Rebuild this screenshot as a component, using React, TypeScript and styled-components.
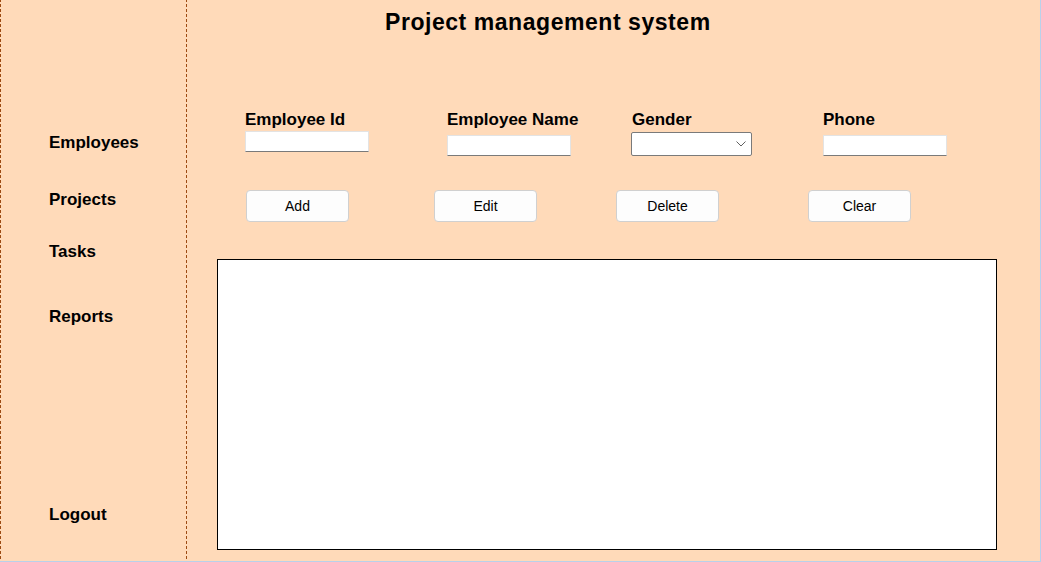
import React from "react";
import styled, { createGlobalStyle } from "styled-components";

const GlobalStyle = createGlobalStyle`
  html, body { margin: 0; padding: 0; background: #ffdab9; }
  body { font-family: "Liberation Sans", Arial, sans-serif; }
  * { box-sizing: border-box; }
`;

const Frame = styled.div`
  width: 1041px;
  height: 562px;
  display: flex;
  background: #ffdab9;
  border-right: 1px solid #b9d1ea;
  border-bottom: 1px solid #b9d1ea;
  overflow: hidden;
`;

const Sidebar = styled.nav`
  width: 187px;
  height: 560px;
  flex: none;
  display: flex;
  flex-direction: column;
  padding: 133px 0 35px 48px;
  border-left: 1px solid transparent;
  border-right: 1px solid transparent;
  border-image: repeating-linear-gradient(to bottom, #9c4a12 0 3px, transparent 3px 5px) 1;
`;

const NavItem = styled.div<{ $gap?: number; $bottom?: boolean }>`
  font-size: 17px;
  font-weight: bold;
  line-height: 20px;
  color: #000;
  margin-top: ${(p) => (p.$bottom ? "auto" : `${p.$gap ?? 0}px`)};
`;

const Main = styled.main`
  flex: 1;
  display: flex;
  flex-direction: column;
`;

const Title = styled.h1`
  margin: 8px 0 0 198px;
  font-size: 23px;
  font-weight: bold;
  letter-spacing: 0.55px;
  line-height: 28px;
  color: #000;
`;

const Fields = styled.div`
  margin-top: 74px;
  padding-left: 58px;
  display: grid;
  grid-template-columns: 202px 184px 192px auto;
  align-items: start;
`;

const Field = styled.div`
  display: flex;
  flex-direction: column;
  align-items: flex-start;
`;

const Label = styled.label<{ $indent?: number }>`
  font-size: 17px;
  font-weight: bold;
  line-height: 20px;
  color: #000;
  padding-left: ${(p) => p.$indent ?? 0}px;
`;

const TextInput = styled.input<{ $offset: number }>`
  margin-top: ${(p) => p.$offset}px;
  width: 124px;
  height: 21px;
  background: #fff;
  border: 1px solid #e3e3e3;
  border-bottom-color: #7a7a7a;
  border-radius: 0;
  padding: 0 3px;
  font: 14px "Liberation Sans", Arial, sans-serif;
  outline: none;
`;

const SelectBox = styled.div<{ $offset: number }>`
  margin-top: ${(p) => p.$offset}px;
  width: 121px;
  height: 24px;
  background: #fff;
  border: 1px solid #7a7a7a;
  border-radius: 2px;
  display: flex;
  align-items: center;
  justify-content: flex-end;
  padding-right: 5px;
`;

const Buttons = styled.div`
  margin-top: 34px;
  padding-left: 59px;
  display: grid;
  grid-template-columns: 188px 182px 192px 103px;
`;

const Button = styled.button`
  width: 103px;
  height: 32px;
  background: #fdfdfd;
  border: 1px solid #d0d0d0;
  border-radius: 4px;
  font: 14px "Liberation Sans", Arial, sans-serif;
  color: #000;
  padding: 0;
`;

const Grid = styled.div`
  margin: 37px 0 0 30px;
  width: 780px;
  height: 291px;
  background: #fff;
  border: 1px solid #000;
`;

const Chevron = () => (
  <svg width="10" height="6" viewBox="0 0 10 6">
    <path d="M0.5 0.5 L5 5 L9.5 0.5" fill="none" stroke="#606060" strokeWidth="1" />
  </svg>
);

export default function App() {
  return (
    <>
      <GlobalStyle />
      <Frame>
        <Sidebar>
          <NavItem>Employees</NavItem>
          <NavItem $gap={37}>Projects</NavItem>
          <NavItem $gap={32}>Tasks</NavItem>
          <NavItem $gap={45}>Reports</NavItem>
          <NavItem $bottom>Logout</NavItem>
        </Sidebar>
        <Main>
          <Title>Project management system</Title>
          <Fields>
            <Field>
              <Label>Employee Id</Label>
              <TextInput $offset={1} />
            </Field>
            <Field>
              <Label>Employee Name</Label>
              <TextInput $offset={5} />
            </Field>
            <Field>
              <Label $indent={1}>Gender</Label>
              <SelectBox $offset={2}>
                <Chevron />
              </SelectBox>
            </Field>
            <Field>
              <Label>Phone</Label>
              <TextInput $offset={5} />
            </Field>
          </Fields>
          <Buttons>
            <Button>Add</Button>
            <Button>Edit</Button>
            <Button>Delete</Button>
            <Button>Clear</Button>
          </Buttons>
          <Grid />
        </Main>
      </Frame>
    </>
  );
}
